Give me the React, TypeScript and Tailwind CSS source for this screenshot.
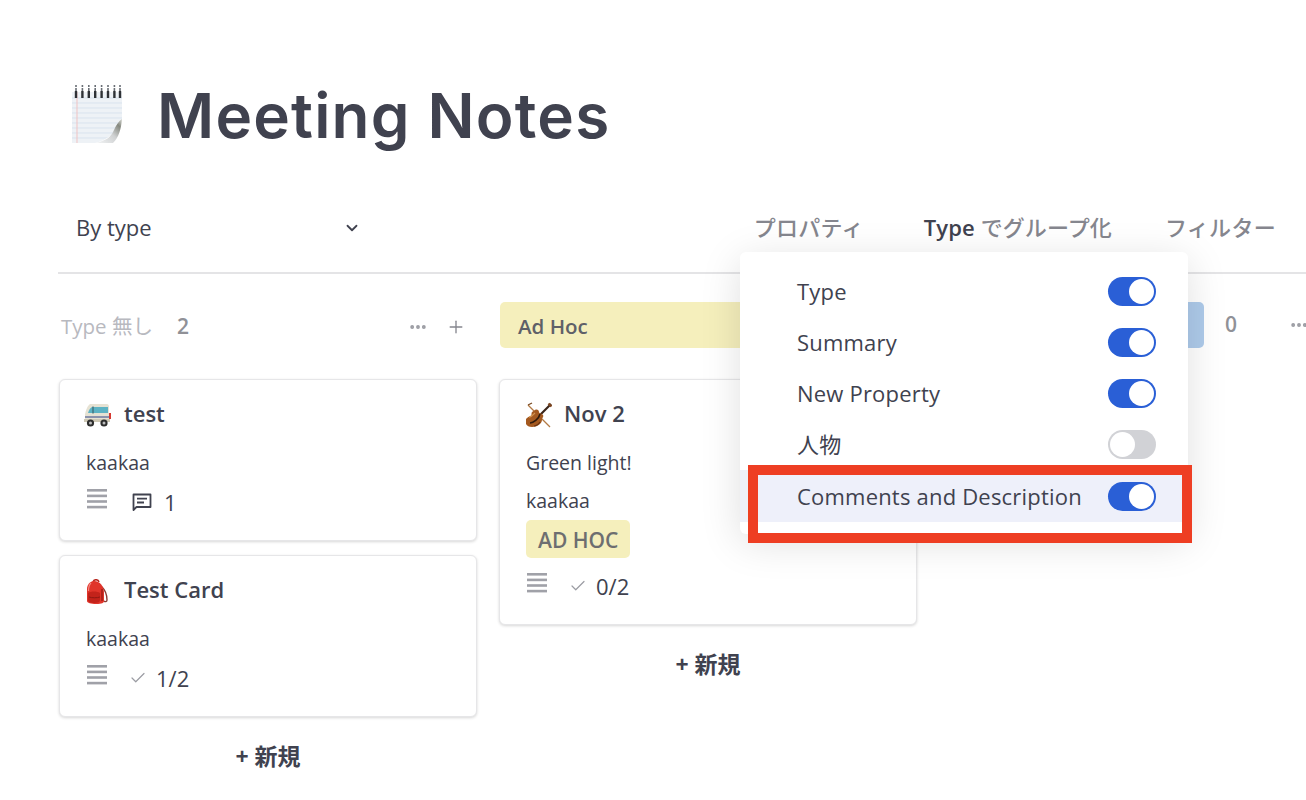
import { ChevronDown, MoreHorizontal, Plus, Check } from 'lucide-react'

const FONT = "font-['Open_Sans','Noto_Sans_CJK_JP',sans-serif]"

function NotepadEmoji() {
  return (
    <svg width="52" height="58" viewBox="0 0 52 58" className="shrink-0">
      <defs>
        <linearGradient id="curl" x1="0" y1="1" x2="1" y2="0">
          <stop offset="0" stopColor="#f4f6f7" />
          <stop offset="0.5" stopColor="#cfd1d2" />
          <stop offset="0.8" stopColor="#85887f" />
          <stop offset="1" stopColor="#d9dbd5" />
        </linearGradient>
      </defs>
      <path d="M1 7h50v51H1z" fill="#eef2f6" />
      {[13, 18, 23, 28, 33, 38, 43, 48, 53].map((y) => (
        <path key={y} d="M1 0h50" transform={`translate(0 ${y})`} stroke="#d9e3ee" strokeWidth="1" />
      ))}
      <path d="M6 7v51" stroke="#f0c3c3" strokeWidth="1" />
      {[5, 11.4, 17.8, 24.2, 30.6, 37, 43.4, 49].map((x) => (
        <g key={x}>
          <path d={`M${x} 0v2M${x} 3v3`} stroke="#6a6f76" strokeWidth="1.6" />
          <path d={`M${x} 6v7`} stroke="#2f3236" strokeWidth="2.4" />
        </g>
      ))}
      <path d="M24 58c12-3 22-10 27-24v24z" fill="#fff" />
      <path d="M24 58c11-2 16-6 19-13 2-5 5-9 8-11-1 10-3 18-9 24z" fill="url(#curl)" />
    </svg>
  )
}

function VanEmoji() {
  return (
    <svg width="27" height="24" viewBox="0 0 27 24" className="-ml-[2px] shrink-0">
      <path d="M6 1h17c1 0 2 1 2 3v13H1v-5c0-2 2-9 5-11z" fill="#e6e2d3" />
      <path d="M8 4h16v6H4c1-3 2-5 4-6z" fill="#5db3c4" />
      <path d="M9 3.5v7" stroke="#3d6670" strokeWidth="1.2" />
      <path d="M1 13h24v2H1z" fill="#8b93ad" />
      <path d="M25 10h2v6h-2z" fill="#d63a32" />
      <path d="M0 16h26v3H0z" fill="#cfc9b6" />
      <circle cx="6.5" cy="20" r="3.6" fill="#2d2d2d" />
      <circle cx="6.5" cy="20" r="1.5" fill="#bdbdbd" />
      <circle cx="20" cy="20" r="3.6" fill="#2d2d2d" />
      <circle cx="20" cy="20" r="1.5" fill="#bdbdbd" />
    </svg>
  )
}

function BackpackEmoji() {
  return (
    <svg width="21" height="25" viewBox="0 0 21 25" className="ml-[1px] shrink-0">
      <path d="M15 8c3 3 5 8 5 13 0 2-2 2-3 1" fill="none" stroke="#8a3b33" strokeWidth="1.4" />
      <path d="M6 3c1-3 5-3 6 0" fill="none" stroke="#b92a22" strokeWidth="1.6" />
      <path d="M7 2c6 0 10 5 10 12v8c0 2-2 3-8 3-5 0-9-1-9-3V10C0 6 3 2 7 2z" fill="#e0342a" />
      <path d="M1 14c3-2 9-2 12 0v7c0 2-2 3-6 3s-6-1-6-3z" fill="#c3231b" />
      <path d="M4 4C2 6 1.500 9 1.500 12" stroke="#f4877f" strokeWidth="1.2" fill="none" />
      <path d="M2 18c3 1 8 1 11 0" stroke="#8f1812" strokeWidth="1" fill="none" />
      <path d="M15 10v12" stroke="#9d1c15" strokeWidth="1.4" />
    </svg>
  )
}

function ViolinEmoji() {
  return (
    <svg width="26" height="26" viewBox="0 0 26 26" className="shrink-0">
      <path d="M2 3 L24 25" stroke="#b27a45" strokeWidth="1.3" />
      <path d="M2 3 L6 1" stroke="#7a4a22" strokeWidth="1.3" />
      <path d="M25 2 13 14" stroke="#3a2418" strokeWidth="2.2" />
      <path d="M22.500 1.500l3 3" stroke="#7d451f" strokeWidth="2.4" />
      <path d="M9 8c2-1 4 0 4 2s3 1 4 3-1 3-1 4 0 3-2 5-5 3-8 3-5-1-6-3-1-4 1-6 3-1 4-2 0-3 1-4 2-1 3-2z" fill="#a4591f" />
      <path d="M4 21c3 0 9-4 10-9" stroke="#2f1a0c" strokeWidth="1.6" fill="none" />
      <path d="M3 15c2 0 4-2 6-4" stroke="#d29350" strokeWidth="1.3" fill="none" />
      <path d="M8 24c2 0 5-2 6-4" stroke="#6b3412" strokeWidth="1.2" fill="none" />
    </svg>
  )
}

function LinesIcon() {
  return (
    <svg width="20" height="20" viewBox="0 0 20 20" className="mb-[7px] ml-[1px] shrink-0">
      {[0, 5.6, 11.2, 16.8].map((y) => (
        <rect key={y} x="0" y={y} width="20" height="2.6" fill="#a0a1a8" />
      ))}
    </svg>
  )
}

function CommentIcon() {
  return (
    <svg width="20" height="19" viewBox="0 0 20 19" fill="none" stroke="#40424f" strokeWidth="1.8" className="shrink-0">
      <path d="M1.500 1.500h17v12.500H4.500l-3 3z" strokeLinejoin="round" />
      <path d="M5 5.700h10M5 9.500h7" />
    </svg>
  )
}

function Toggle({ on }: { on: boolean }) {
  return (
    <div
      className={
        on
          ? 'flex h-[29px] w-12 items-center justify-end rounded-full bg-[#2a5fd6] px-[2px]'
          : 'flex h-[29px] w-12 items-center justify-start rounded-full bg-[#d1d2d6] px-[2px]'
      }
    >
      <div className="h-[25px] w-[25px] rounded-full bg-white" />
    </div>
  )
}

function Card({ children }: { children: React.ReactNode }) {
  return (
    <div className="rounded-[6px] border border-[#e6e6e8] bg-white pl-[26px] shadow-[0_1px_3px_rgba(0,0,0,0.16)]">
      {children}
    </div>
  )
}

function CardTitle({ icon, title }: { icon: React.ReactNode; title: string }) {
  return (
    <div className="flex h-[26px] items-center">
      <div className="flex w-[38px] items-center">{icon}</div>
      <span className="pb-[4px] text-[22px] font-semibold text-[#40424f]">{title}</span>
    </div>
  )
}

function NewButton() {
  return <div className="pt-[22px] text-center text-[23px] font-bold text-[#40424f]">+ 新規</div>
}

const properties = [
  { name: 'Type', on: true },
  { name: 'Summary', on: true },
  { name: 'New Property', on: true },
  { name: '人物', on: false },
  { name: 'Comments and Description', on: true, active: true },
]

export default function App() {
  return (
    <div className={`relative h-[800px] w-[1306px] overflow-hidden bg-white ${FONT}`}>
      <header className="mt-[85px] flex h-[58px] items-center gap-[34px] pl-[71px]">
        <NotepadEmoji />
        <h1 className="pt-[4px] font-['Inter',sans-serif] text-[62px] font-semibold leading-none tracking-[1.2px] text-[#40424f]">Meeting Notes</h1>
      </header>

      <div className="ml-[58px] mt-[42px] flex h-[89px] items-center border-b-2 border-[#e4e4e6] pb-[2px] text-[22px]">
        <div className="flex w-[303px] items-center justify-between pl-[18px] text-[#40424f]">
          <span>By type</span>
          <ChevronDown size={18} strokeWidth={2.4} />
        </div>
        <div className="ml-auto flex items-center pr-[30px] font-medium text-[#85868e]">
          <span className="tracking-[0.3px]">プロパティ</span>
          <span className="ml-[60px] tracking-[0.1px]">
            <span className="font-semibold text-[#40424f]">Type</span> でグループ化
          </span>
          <span className="ml-[53px] tracking-[0.3px]">フィルター</span>
        </div>
      </div>

      <div className="ml-[59px] flex gap-[22px] pt-[28px]">
        <div className="w-[418px] shrink-0">
          <div className="flex h-[46px] items-center pl-[2px] pr-[11px] pt-[3px]">
            <span className="text-[20.500px] text-[#b8b9bf]">Type 無し</span>
            <span className="ml-[24px] text-[21px] font-semibold text-[#909197]">2</span>
            <MoreHorizontal size={20} strokeWidth={2.6} className="ml-auto mr-[-1px] text-[#9b9ca3]" />
            <Plus size={20} strokeWidth={1.6} className="ml-[19px] text-[#85868e]" />
          </div>
          <div className="mt-[31px] flex flex-col gap-[14px]">
            <Card>
              <div className="h-[160px] pt-[22px]">
                <CardTitle icon={<VanEmoji />} title="test" />
                <div className="mt-[22px] text-[19.500px] leading-[26px] text-[#40424f]">kaakaa</div>
                <div className="mt-[14px] flex h-[24px] items-center text-[22px] text-[#40424f]">
                  <LinesIcon />
                  <span className="ml-[25px]"><CommentIcon /></span>
                  <span className="ml-[12px]">1</span>
                </div>
              </div>
            </Card>
            <Card>
              <div className="h-[160px] pt-[22px]">
                <CardTitle icon={<BackpackEmoji />} title="Test Card" />
                <div className="mt-[22px] text-[19.500px] leading-[26px] text-[#40424f]">kaakaa</div>
                <div className="mt-[14px] flex h-[24px] items-center text-[22px] text-[#40424f]">
                  <LinesIcon />
                  <Check size={18} strokeWidth={1.6} className="ml-[22px] text-[#9b9ca3]" />
                  <span className="ml-[9px]">1/2</span>
                </div>
              </div>
            </Card>
          </div>
          <NewButton />
        </div>

        <div className="w-[418px] shrink-0">
          <div className="ml-[1px] flex h-[46px] w-[265px] items-center rounded-[5px] bg-[#f5efbc] pl-[18px] pt-[2px] text-[20.500px] font-semibold text-[#5f6068]">
            Ad Hoc
          </div>
          <div className="mt-[31px]">
            <Card>
              <div className="h-[244px] pt-[22px]">
                <CardTitle icon={<ViolinEmoji />} title="Nov 2" />
                <div className="mt-[22px] text-[19.500px] leading-[26px] text-[#40424f]">Green light!</div>
                <div className="mt-[12px] text-[19.500px] leading-[26px] text-[#40424f]">kaakaa</div>
                <div className="mt-[6px] w-fit rounded-[5px] bg-[#f5efbc] px-[12px] pb-[3px] pt-[5px] text-[21px] font-semibold leading-[30px] text-[#6d6e70]">
                  AD HOC
                </div>
                <div className="mt-[16px] flex h-[24px] items-center text-[22px] text-[#40424f]">
                  <LinesIcon />
                  <Check size={18} strokeWidth={1.6} className="ml-[22px] text-[#9b9ca3]" />
                  <span className="ml-[9px]">0/2</span>
                </div>
              </div>
            </Card>
          </div>
          <NewButton />
        </div>

        <div className="w-[418px] shrink-0">
          <div className="flex h-[46px] items-center">
            <div className="h-[46px] w-[265px] rounded-[5px] bg-[#aecbeb]" />
            <span className="ml-[21px] text-[21px] font-semibold text-[#909197]">0</span>
            <MoreHorizontal size={20} strokeWidth={2.6} className="ml-[52px] text-[#9b9ca3]" />
          </div>
        </div>
      </div>

      {/* properties menu */}
      <div className="absolute left-[740px] top-[252px] w-[448px] rounded-[6px] bg-white pb-[12px] pt-[14px] shadow-[0_8px_40px_rgba(0,0,0,0.13)]">
        {properties.map((p) => (
          <div
            key={p.name}
            className={
              p.active
                ? 'flex h-[52px] items-center justify-between bg-[#eef0fa] pl-[57px] pr-[32px] text-[22px] tracking-[0.2px] text-[#40424f]'
                : 'flex h-[51px] items-center justify-between pl-[57px] pr-[32px] text-[22px] tracking-[0.2px] text-[#40424f]'
            }
          >
            <span>{p.name}</span>
            <Toggle on={p.on} />
          </div>
        ))}
      </div>

      {/* annotation */}
      <div className="pointer-events-none absolute left-[748px] top-[465px] h-[78px] w-[444px] border-[10px] border-[#ee3e23]" />
    </div>
  )
}
